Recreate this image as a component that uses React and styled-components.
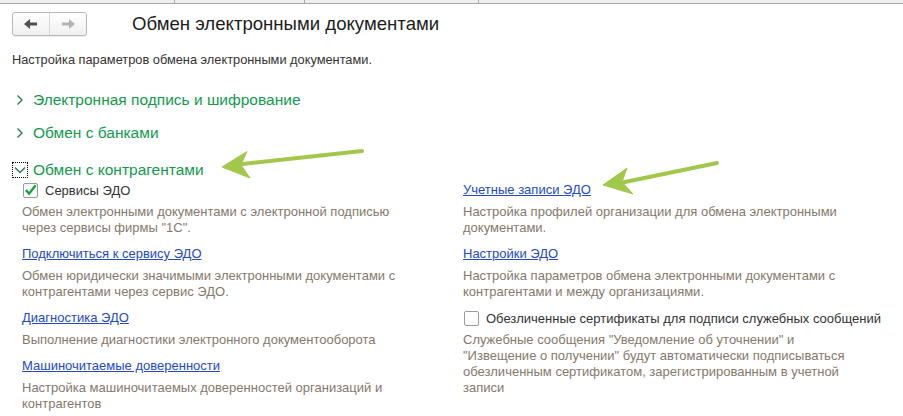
import React from 'react'
import styled, { createGlobalStyle } from 'styled-components'

const GlobalStyle = createGlobalStyle`
    html, body {
        margin: 0;
        padding: 0;
        background: #fff;
    }
    body {
        font-family: 'Liberation Sans', Arial, sans-serif;
        font-size: 13px;
        color: #333;
    }
`

const groups = [
    { title: 'Электронная подпись и шифрование', gap: 22 },
    { title: 'Обмен с банками', gap: 13 },
]

const leftItems = [
    {
        kind: 'check',
        checked: true,
        title: 'Сервисы ЭДО',
        desc: ['Обмен электронными документами с электронной подписью', 'через сервисы фирмы "1С".'],
    },
    {
        kind: 'link',
        title: 'Подключиться к сервису ЭДО',
        desc: ['Обмен юридически значимыми электронными документами с', 'контрагентами через сервис ЭДО.'],
    },
    {
        kind: 'link',
        title: 'Диагностика ЭДО',
        desc: ['Выполнение диагностики электронного документооборота'],
    },
    {
        kind: 'link',
        title: 'Машиночитаемые доверенности',
        desc: ['Настройка машиночитаемых доверенностей организаций и', 'контрагентов'],
    },
]

const rightItems = [
    {
        kind: 'link',
        title: 'Учетные записи ЭДО',
        desc: ['Настройка профилей организации для обмена электронными', 'документами.'],
    },
    {
        kind: 'link',
        title: 'Настройки ЭДО',
        desc: ['Настройка параметров обмена электронными документами с', 'контрагентами и между организациями.'],
    },
    {
        kind: 'check',
        checked: false,
        title: 'Обезличенные сертификаты для подписи служебных сообщений',
        desc: [
            'Служебные сообщения "Уведомление об уточнении" и',
            '"Извещение о получении" будут автоматически подписываться',
            'обезличенным сертификатом, зарегистрированным в учетной',
            'записи',
        ],
    },
]

function NavArrow({ dir, color }) {
    const flip = dir === 'right' ? 'scale(-1,1) translate(-14,0)' : undefined
    return (
        <svg width="14" height="10" viewBox="0 0 14 10">
            <g transform={flip} fill={color}>
                <polygon points="0,5 6,0 6,10" />
                <rect x="5" y="3.5" width="8" height="3" />
            </g>
        </svg>
    )
}

function Item({ item }) {
    return (
        <Block>
            {item.kind === 'check' ? (
                <CheckRow>
                    <Box>
                        {item.checked && (
                            <svg width="14" height="12" viewBox="0 0 14 12">
                                <path d="M2 6 L5.5 10 L12.5 1" fill="none" stroke="#16a040" strokeWidth="2.6" />
                            </svg>
                        )}
                    </Box>
                    <span>{item.title}</span>
                </CheckRow>
            ) : (
                <LinkRow href="#">{item.title}</LinkRow>
            )}
            <Desc>
                {item.desc.map((line) => (
                    <div key={line}>{line}</div>
                ))}
            </Desc>
        </Block>
    )
}

export default function App() {
    return (
        <>
            <GlobalStyle />
            <Page>
                <TopStrip>
                    <Tab w={175} />
                    <Tab w={130} />
                    <Tab w={174} />
                    <Tab />
                </TopStrip>

                <Header>
                    <NavGroup>
                        <NavButton>
                            <NavArrow dir="left" color="#505050" />
                        </NavButton>
                        <NavButton>
                            <NavArrow dir="right" color="#b4b4b4" />
                        </NavButton>
                    </NavGroup>
                    <Title>Обмен электронными документами</Title>
                </Header>

                <Intro>Настройка параметров обмена электронными документами.</Intro>

                {groups.map((g) => (
                    <GroupHeader key={g.title} gap={g.gap}>
                        <Toggle>
                            <svg width="8" height="12" viewBox="0 0 8 12">
                                <path d="M1.5 1.5 L6 6 L1.5 10.5" fill="none" stroke="#23784a" strokeWidth="1.3" />
                            </svg>
                        </Toggle>
                        {g.title}
                    </GroupHeader>
                ))}

                <GroupHeader gap={17} open>
                    <Toggle focused>
                        <svg width="12" height="8" viewBox="0 0 12 8">
                            <path d="M1 1.5 L6 6.5 L11 1.5" fill="none" stroke="#23784a" strokeWidth="1.3" />
                        </svg>
                    </Toggle>
                    Обмен с контрагентами
                </GroupHeader>

                <Columns>
                    <Column>
                        {leftItems.map((it) => (
                            <Item key={it.title} item={it} />
                        ))}
                    </Column>
                    <Column>
                        {rightItems.map((it) => (
                            <Item key={it.title} item={it} />
                        ))}
                    </Column>
                </Columns>

                <Overlay width="903" height="416" viewBox="0 0 903 416">
                    <g fill="#a2c84b" stroke="#a2c84b">
                        <line x1="362" y1="151" x2="238" y2="164.5" strokeWidth="4" strokeLinecap="round" />
                        <polygon points="222,167 247,151.5 241,165 250,178" strokeWidth="1" strokeLinejoin="round" />
                        <line x1="717" y1="163" x2="620" y2="183" strokeWidth="4" strokeLinecap="round" />
                        <polygon points="603,185 627,168 622,182 633,194" strokeWidth="1" strokeLinejoin="round" />
                    </g>
                </Overlay>
            </Page>
        </>
    )
}

const Page = styled.div`
    position: relative;
    width: 903px;
    height: 416px;
    overflow: hidden;
    background: #fff;
`

const TopStrip = styled.div`
    display: flex;
    height: 3px;
    background: #eeeeee;
    border-bottom: 1px solid #a9a9a9;
`

const Tab = styled.div`
    width: ${(p) => (p.w ? `${p.w}px` : 'auto')};
    flex: ${(p) => (p.w ? 'none' : '1')};
    border-right: 1px solid #a9a9a9;
    box-sizing: border-box;

    &:last-child {
        border-right: none;
    }
`

const Header = styled.div`
    display: flex;
    align-items: center;
    height: 24px;
    margin-top: 8px;
    padding-left: 12px;
`

const NavGroup = styled.div`
    display: flex;
    height: 24px;
    box-sizing: border-box;
    border: 1px solid #b8b8b8;
    border-radius: 3px;
    background: linear-gradient(#ffffff, #f0f0f0);
    box-shadow: 0 1px 1px rgba(0, 0, 0, 0.08);
`

const NavButton = styled.div`
    width: 36px;
    display: flex;
    align-items: center;
    justify-content: center;

    & + & {
        border-left: 1px solid #d6d6d6;
    }
`

const Title = styled.div`
    margin-left: 45px;
    font-size: 18.6px;
    color: #1c1c1c;
    white-space: nowrap;
`

const Intro = styled.div`
    margin-top: 16px;
    padding-left: 12px;
    line-height: 16px;
    font-size: 12.8px;
    color: #333;
`

const GroupHeader = styled.div`
    display: flex;
    align-items: center;
    height: 20px;
    margin-top: ${(p) => p.gap}px;
    padding-left: ${(p) => (p.open ? 12 : 15)}px;
    font-size: 15.5px;
    color: #129a4c;
    white-space: nowrap;
`

const Toggle = styled.span`
    display: inline-flex;
    align-items: center;
    justify-content: center;
    width: ${(p) => (p.focused ? '16px' : '10px')};
    height: ${(p) => (p.focused ? '16px' : '14px')};
    box-sizing: border-box;
    margin-right: ${(p) => (p.focused ? '5px' : '8px')};
    border: ${(p) => (p.focused ? '1px dotted #000' : 'none')};
`

const Columns = styled.div`
    display: grid;
    grid-template-columns: 441px 1fr;
    margin-top: 2px;
    padding-left: 22px;
`

const Column = styled.div`
    display: flex;
    flex-direction: column;
    gap: 10px;
`

const Block = styled.div`
    display: flex;
    flex-direction: column;
    gap: 6px;
`

const CheckRow = styled.label`
    display: flex;
    align-items: center;
    gap: 7px;
    height: 16px;
    color: #333;
    white-space: nowrap;
`

const Box = styled.span`
    display: inline-flex;
    align-items: center;
    justify-content: center;
    width: 15px;
    height: 15px;
    box-sizing: border-box;
    border: 1px solid #9a9a9a;
    border-radius: 2px;
    background: #fff;
    margin-left: 1px;
`

const LinkRow = styled.a`
    display: block;
    width: max-content;
    line-height: 16px;
    color: #2448c8;
    text-decoration: underline;
    white-space: nowrap;
`

const Desc = styled.div`
    line-height: 16px;
    color: #85796a;
    white-space: nowrap;
`

const Overlay = styled.svg`
    position: absolute;
    top: 0;
    left: 0;
    pointer-events: none;
`
